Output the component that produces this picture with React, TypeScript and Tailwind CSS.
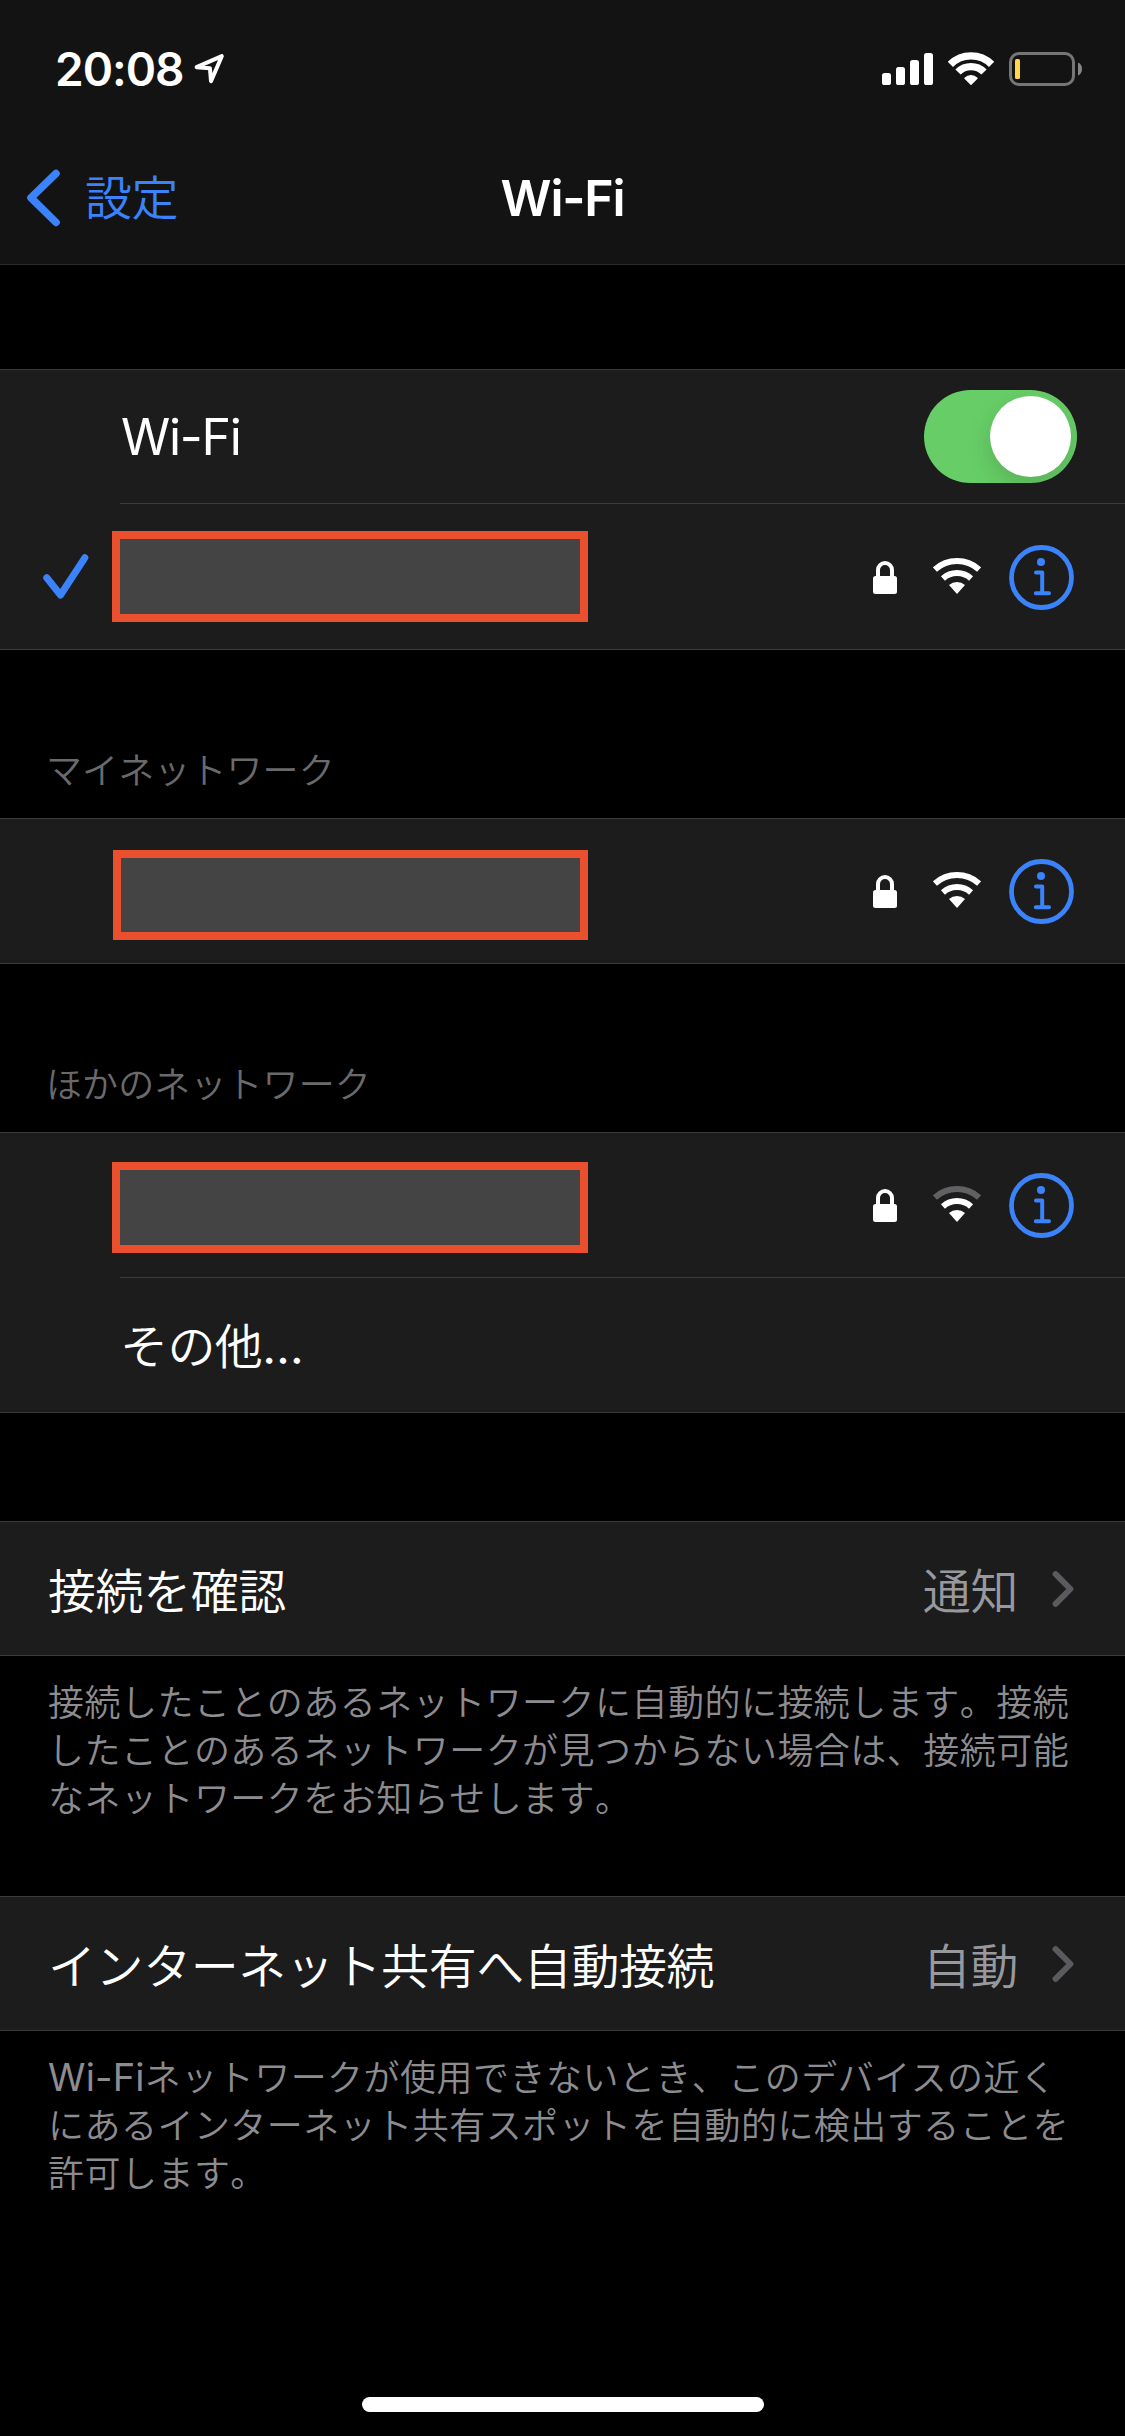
import type { ReactNode } from "react";

function LocationIcon() {
  return (
    <svg className="h-9 w-9" viewBox="0 0 36 36" fill="none" stroke="#fff" strokeWidth="4" strokeLinejoin="round">
      <path d="M4.6 16.2 L29.8 5.2 L19 30.2 L17.9 17.2 Z" />
    </svg>
  );
}

function SignalIcon() {
  return (
    <svg className="h-[34px] w-[51px]" viewBox="0 0 51 34" fill="#fff">
      <rect x="0" y="21" width="9" height="12" rx="2.6" />
      <rect x="14" y="15" width="9" height="18" rx="2.6" />
      <rect x="28" y="8" width="9" height="25" rx="2.6" />
      <rect x="42" y="1" width="9" height="32" rx="2.6" />
    </svg>
  );
}

function StatusWifiIcon() {
  return (
    <svg className="h-[34px] w-[46px]" viewBox="0 0 46 34" fill="none" stroke="#fff" strokeWidth="7.4">
      <path d="M2.4 12.4 A29.2 29.2 0 0 1 43.6 12.4" />
      <path d="M10 20 A18.4 18.4 0 0 1 36 20" />
      <path d="M23 32.2 L17 26.2 A8.6 8.6 0 0 1 29 26.2 Z" fill="#fff" strokeWidth="1.4" strokeLinejoin="round" />
    </svg>
  );
}

function BatteryIcon() {
  return (
    <svg className="h-[34px] w-[74px]" viewBox="0 0 74 34" fill="none">
      <rect x="1.5" y="1.5" width="63" height="31" rx="8.5" stroke="#767676" strokeWidth="3" />
      <rect x="6" y="7" width="5" height="20" rx="1.5" fill="#ffd748" />
      <path d="M69 10.5 C71.6 11.6 73 14 73 17 C73 20 71.6 22.4 69 23.5 Z" fill="#868686" />
    </svg>
  );
}

function LockIcon() {
  return (
    <svg className="h-[33px] w-6" viewBox="0 0 24 33" fill="none">
      <rect x="0" y="15" width="24" height="18" rx="2.5" fill="#fff" />
      <path d="M5 17 V9 A7 7 0 0 1 19 9 V17" stroke="#fff" strokeWidth="4" />
    </svg>
  );
}

function WifiIcon({ weak }: { weak?: boolean }) {
  return (
    <svg className="h-9 w-12" viewBox="0 0 48 36" fill="none" strokeWidth="6">
      <path d="M1.9 11.5 A33 33 0 0 1 46.1 11.5" stroke={weak ? "#616163" : "#fff"} />
      <path d="M9.95 20.4 A21 21 0 0 1 38.05 20.4" stroke="#fff" />
      <path d="M24 36 L16 27.1 A12 12 0 0 1 32 27.1 Z" fill="#fff" />
    </svg>
  );
}

function InfoIcon() {
  return (
    <svg className="h-[65px] w-[65px]" viewBox="0 0 65 65" fill="none" stroke="#3a83fc" strokeLinecap="round" strokeLinejoin="round">
      <circle cx="32.5" cy="32.5" r="30" strokeWidth="4.8" />
      <circle cx="32" cy="17" r="4" fill="#3a83fc" stroke="none" />
      <path d="M27 27.5 H33.2 V48 M26.8 48.2 H40" strokeWidth="4" />
    </svg>
  );
}

function CheckIcon() {
  return (
    <svg className="-mt-[2px] h-[45px] w-[46px]" viewBox="0 0 46 45" fill="none" stroke="#3a83fc" strokeWidth="7" strokeLinecap="round" strokeLinejoin="round">
      <path d="M3.8 23.8 L17.5 41 L41.8 3.8" />
    </svg>
  );
}

function ChevronRight() {
  return (
    <svg className="h-9 w-[22px]" viewBox="0 0 22 36" fill="none" stroke="#5b5b5f" strokeWidth="6" strokeLinecap="round" strokeLinejoin="round">
      <path d="M3.6 3.2 L18.4 18 L3.6 32.8" />
    </svg>
  );
}

function Group({ children }: { children: ReactNode }) {
  return <section className="border-y border-[#3b3b3c] bg-[#1c1c1c]">{children}</section>;
}

function Heading({ children }: { children: ReactNode }) {
  return (
    <h2 className="flex h-[168px] items-end pb-[23px] pl-[46px] text-[36px] leading-[48px] tracking-[0.1px] text-[#6a6a6c]">
      {children}
    </h2>
  );
}

function NetworkRow({ selected, weak, mask }: { selected?: boolean; weak?: boolean; mask: string }) {
  return (
    <div className="flex h-36 items-center pr-[51px]">
      <div className="flex w-28 shrink-0 pl-[43px]">{selected && <CheckIcon />}</div>
      <div className={`border-8 border-[#ea502d] bg-[#444444] ${mask}`} />
      <div className="ml-auto flex items-center pt-px">
        <LockIcon />
        <div className="-mt-[3px] ml-9 mr-7">
          <WifiIcon weak={weak} />
        </div>
        <InfoIcon />
      </div>
    </div>
  );
}

function Divider() {
  return <div className="ml-[120px] h-px bg-[#3b3b3c]" />;
}

function LinkRow({ label, value }: { label: string; value: string }) {
  return (
    <div className="flex h-[133px] items-center pl-12 pr-[51px] text-[48px] leading-[60px] tracking-[-0.42px]">
      <span className="mt-[6px] text-white">{label}</span>
      <span className="ml-auto mr-[34px] mt-[6px] text-[#98989f]">{value}</span>
      <ChevronRight />
    </div>
  );
}

function Note({ lines, className }: { lines: ReactNode[]; className: string }) {
  return (
    <p className={`whitespace-nowrap pl-12 pt-[23px] text-[36px] leading-[48px] tracking-[0.47px] text-[#8c8c91] ${className}`}>
      {lines.map((line, i) => (
        <span key={i} className="block">
          {line}
        </span>
      ))}
    </p>
  );
}

export default function App() {
  return (
    <div
      lang="ja"
      className="flex h-[2436px] w-[1125px] flex-col overflow-hidden bg-black font-['Inter','Noto_Sans_CJK_JP',sans-serif] font-[350] text-white [font-kerning:none]"
    >
      <header className="h-[265px] border-b border-[#2b2b2b] bg-[#131313]">
        <div className="flex h-[132px] items-center pl-[55px] pr-[42px] pt-1.5">
          <span className="w-[137px] whitespace-nowrap text-[46px] leading-none font-semibold tracking-[-1px] [font-kerning:normal]">20:08</span>
          <LocationIcon />
          <div className="ml-auto flex items-center gap-[15px]">
            <SignalIcon />
            <StatusWifiIcon />
            <BatteryIcon />
          </div>
        </div>
        <div className="grid h-[132px] grid-cols-3 items-center">
          <div className="flex items-center pl-[26px] text-[#3a83fc]">
            <svg className="h-[58px] w-9" viewBox="0 0 36 58" fill="none" stroke="currentColor" strokeWidth="7.6" strokeLinecap="round" strokeLinejoin="round">
              <path d="M30 4.6 L5 28.8 L30 53.4" />
            </svg>
            <span className="ml-[23px] text-[47px] leading-[60px] tracking-[-0.6px]">設定</span>
          </div>
          <h1 className="text-center text-[50px] leading-[60px] font-semibold tracking-[-1.2px] [font-kerning:normal]">Wi-Fi</h1>
        </div>
      </header>

      <main className="mt-[104px] grow">
        <Group>
          <div className="flex h-[133px] items-center justify-between pl-[121px] pr-12">
            <span className="text-[50px] leading-[60px] font-normal tracking-[-1.3px] [font-kerning:normal]">Wi-Fi</span>
            <div className="flex h-[93px] w-[153px] items-center justify-end overflow-hidden rounded-full bg-[#67ce67] pr-1.5">
              <div className="h-[81px] w-[81px] rounded-full bg-white shadow-[0_9px_24px_rgba(0,0,0,0.15)]" />
            </div>
          </div>
          <Divider />
          <div className="pt-px">
            <NetworkRow selected mask="-mt-[2px] h-[91px] w-[476px]" />
          </div>
        </Group>

        <Heading>マイネットワーク</Heading>
        <Group>
          <NetworkRow mask="ml-px mt-2 h-[90px] w-[475px]" />
        </Group>

        <Heading>ほかのネットワーク</Heading>
        <Group>
          <NetworkRow weak mask="mt-[5px] h-[91px] w-[476px]" />
          <Divider />
          <div className="flex h-[134px] items-center pl-[120px] text-[48px] leading-[60px] tracking-[-0.6px]">
            <span className="mt-1">
              その他<span className="font-normal">…</span>
            </span>
          </div>
        </Group>

        <div className="mt-[108px]">
          <Group>
            <LinkRow label="接続を確認" value="通知" />
          </Group>
          <Note
            className="h-[240px]"
            lines={[
              "接続したことのあるネットワークに自動的に接続します。接続",
              "したことのあるネットワークが見つからない場合は、接続可能",
              "なネットワークをお知らせします。",
            ]}
          />
          <Group>
            <LinkRow label="インターネット共有へ自動接続" value="自動" />
          </Group>
          <Note
            className=""
            lines={[
              <>
                <span className="text-[38px] leading-none font-normal tracking-[0.2px]">Wi-Fi</span>
                ネットワークが使用できないとき、このデバイスの近く
              </>,
              "にあるインターネット共有スポットを自動的に検出することを",
              "許可します。",
            ]}
          />
        </div>
      </main>

      <div className="mx-auto mb-6 h-[15px] w-[402px] rounded-full bg-white" />
    </div>
  );
}
